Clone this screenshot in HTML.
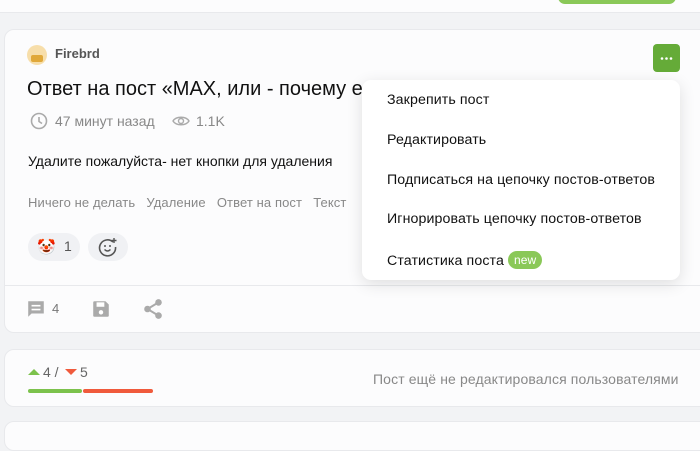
<!DOCTYPE html>
<html><head><meta charset="utf-8"><style>
*{margin:0;padding:0;box-sizing:border-box}
body{width:700px;height:426px;overflow:hidden;background:#f2f3f5;font-family:"Liberation Sans","Noto Sans CJK SC",sans-serif;position:relative;color:#111}
.card{position:absolute;background:#fcfcfd;border:1px solid #e8e9ec;border-radius:10px}
.abs{position:absolute;white-space:nowrap}
.menu{position:absolute;left:362px;top:80px;width:318px;height:200px;background:#fff;border-radius:9px;box-shadow:0 4px 16px rgba(0,0,0,.12)}
.menu div{position:absolute;left:25px;font-size:14.2px;color:#111;letter-spacing:0.1px}
</style></head><body>
<div class="card" style="left:-10px;top:-20px;width:720px;height:33px"></div>
<div class="abs" style="left:558px;top:-10px;width:118px;height:14px;background:#8ac858;border-radius:8px"></div>

<div class="card" style="left:4px;top:29px;width:710px;height:304px"></div>
<div class="abs" style="left:4px;top:285px;width:700px;height:1px;background:#e8e9ec"></div>
<div class="abs" style="left:27px;top:45px;width:20px;height:20px;border-radius:50%;background:#f7deaa"></div>
<div class="abs" style="left:31px;top:55px;width:12px;height:7px;background:#e0a83a;border-radius:2px"></div>
<div class="abs" style="left:55px;top:46px;font-size:13px;font-weight:bold;color:#555">Firebrd</div>
<div class="abs" style="left:27px;top:78px;font-size:20px;color:#111">Ответ на пост «MAX, или - почему ег</div>
<svg class="abs" style="left:30px;top:112px" width="18" height="18" viewBox="0 0 18 18"><circle cx="9" cy="9" r="7.5" fill="none" stroke="#aaa" stroke-width="1.6"/><path d="M9 5v4.5l3 2" fill="none" stroke="#aaa" stroke-width="1.6"/></svg>
<div class="abs" style="left:55px;top:113px;font-size:14px;color:#888">47 минут назад</div>
<svg class="abs" style="left:172px;top:113px" width="18" height="16" viewBox="0 0 18 16"><path d="M1 8C4 3 14 3 17 8C14 13 4 13 1 8Z" fill="none" stroke="#aaa" stroke-width="1.4"/><circle cx="9" cy="8" r="2.5" fill="none" stroke="#aaa" stroke-width="1.4"/></svg>
<div class="abs" style="left:196px;top:113px;font-size:14px;color:#888">1.1K</div>
<div class="abs" style="left:28px;top:153px;font-size:14px;color:#111">Удалите пожалуйста- нет кнопки для удаления</div>
<div class="abs" style="left:28px;top:195px;font-size:13px;color:#888;letter-spacing:0.1px">Ничего не делать&nbsp;&nbsp;&nbsp;Удаление&nbsp;&nbsp;&nbsp;Ответ на пост&nbsp;&nbsp;&nbsp;Текст</div>
<div class="abs" style="left:28px;top:233px;width:52px;height:28px;border-radius:14px;background:#f0f1f4"></div>
<div class="abs" style="left:37px;top:238px;font-size:15px">🤡</div>
<div class="abs" style="left:64px;top:238px;font-size:14px;color:#555">1</div>
<div class="abs" style="left:88px;top:233px;width:40px;height:28px;border-radius:14px;background:#f0f1f4"></div>
<svg class="abs" style="left:97px;top:236px" width="22" height="22" viewBox="0 0 22 22"><path d="M16 6A8 8 0 1 0 18.5 11" fill="none" stroke="#555" stroke-width="1.6"/><circle cx="8" cy="10" r="1" fill="#555"/><circle cx="13" cy="10" r="1" fill="#555"/><path d="M7.5 13.5q3 3 6 0" fill="none" stroke="#555" stroke-width="1.5"/><path d="M17 2v5M14.5 4.5h5" stroke="#555" stroke-width="1.4"/></svg>
<svg class="abs" style="left:26px;top:299px" width="20" height="20" viewBox="0 0 18 18"><path d="M2 2h14v11H5l-3 3Z" fill="#aaa"/><path d="M5 6h8M5 9.5h8" stroke="#fff" stroke-width="1.5"/></svg>
<div class="abs" style="left:52px;top:301px;font-size:13px;color:#777">4</div>
<svg class="abs" style="left:91px;top:299px" width="20" height="20" viewBox="0 0 18 18"><path d="M2 3a1 1 0 0 1 1-1h10l3 3v10a1 1 0 0 1-1 1H3a1 1 0 0 1-1-1Z" fill="#aaa"/><rect x="5" y="3" width="7" height="4" fill="#fff"/><circle cx="9" cy="12" r="2" fill="#fff"/></svg>
<svg class="abs" style="left:143px;top:298px" width="20" height="22" viewBox="0 0 18 20"><circle cx="14" cy="4" r="3" fill="#aaa"/><circle cx="4" cy="10" r="3" fill="#aaa"/><circle cx="14" cy="16" r="3" fill="#aaa"/><path d="M14 4L4 10L14 16" stroke="#aaa" stroke-width="1.8" fill="none"/></svg>

<div class="abs" style="left:653px;top:44px;width:27px;height:28px;border-radius:4px;background:#65ab38"></div>
<svg class="abs" style="left:653px;top:44px" width="27" height="28"><circle cx="9" cy="14.5" r="1.3" fill="#fff"/><circle cx="13.5" cy="14.5" r="1.3" fill="#fff"/><circle cx="18" cy="14.5" r="1.3" fill="#fff"/></svg>
<div class="menu">
<div style="top:12px">Закрепить пост</div>
<div style="top:52px">Редактировать</div>
<div style="top:92px">Подписаться на цепочку постов-ответов</div>
<div style="top:131px">Игнорировать цепочку постов-ответов</div>
<div style="top:171px">Статистика поста <span style="display:inline-block;background:#8ac858;color:#fff;font-size:12px;padding:2px 6px;border-radius:10px;vertical-align:1px">new</span></div>
</div>

<div class="card" style="left:4px;top:349px;width:710px;height:58px"></div>
<svg class="abs" style="left:28px;top:368px" width="12" height="8"><path d="M0 7L6 1L12 7Z" fill="#7cc24c"/></svg>
<div class="abs" style="left:43px;top:364px;font-size:14px;color:#666">4 /</div>
<svg class="abs" style="left:65px;top:368px" width="12" height="8"><path d="M0 1L6 7L12 1Z" fill="#f05a3c"/></svg>
<div class="abs" style="left:80px;top:364px;font-size:14px;color:#666">5</div>
<div class="abs" style="left:28px;top:389px;width:54px;height:4px;background:#7cc24c;border-radius:2px"></div>
<div class="abs" style="left:83px;top:389px;width:70px;height:4px;background:#f05a3c;border-radius:2px"></div>
<div class="abs" style="left:373px;top:371px;font-size:14px;color:#888;letter-spacing:0.12px">Пост ещё не редактировался пользователями</div>
<div class="card" style="left:4px;top:421px;width:710px;height:30px"></div>
</body></html>
